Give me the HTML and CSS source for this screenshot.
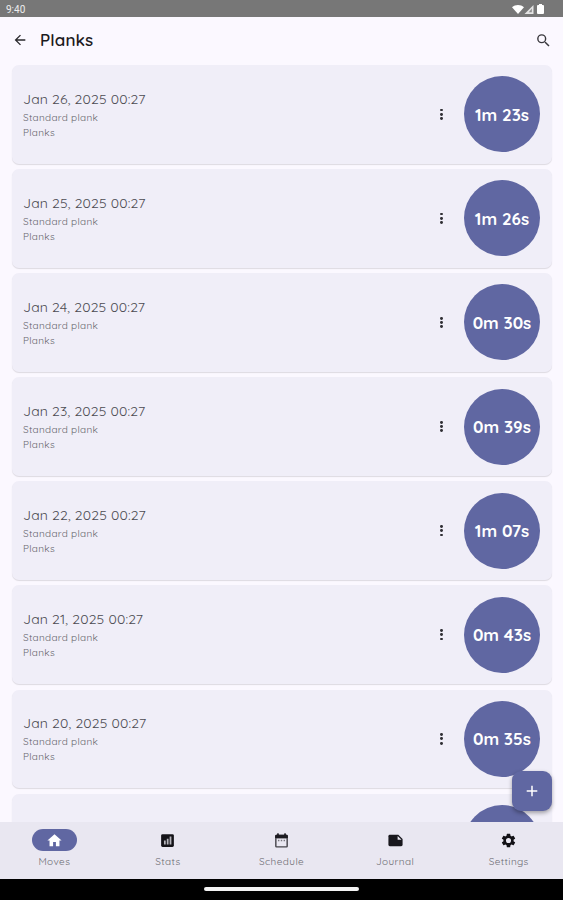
FILE: index.html
```html
<!DOCTYPE html>
<html lang="en">
<head>
    <meta charset="UTF-8">
    <meta name="viewport" content="width=device-width, initial-scale=1.0">
    <title>Planks</title>
    <link rel="stylesheet" href="styles.css">
</head>
<body>
    <div class="status-bar">
        <span class="clock">9:40</span>
        <div class="status-icons">
            <svg width="12" height="9" viewBox="0 0 12 9"><path d="M0 2.2C3.4-.7 8.6-.7 12 2.2L6 9z" fill="#fff"/></svg>
            <svg width="10" height="9" viewBox="0 0 10 9"><path d="M9.500 0v9H.5z" fill="#e4e4e4"/><path d="M7.800 3.500v3.800H4.800z" fill="#8c8c8c"/></svg>
            <svg class="battery" width="7" height="10" viewBox="0 0 7 10"><path d="M2 0h3v1h1a1 1 0 0 1 1 1v7a1 1 0 0 1-1 1H1a1 1 0 0 1-1-1V2a1 1 0 0 1 1-1h1z" fill="#fff"/></svg>
        </div>
    </div>

    <header class="top-bar">
        <svg width="16" height="16" viewBox="0 0 24 24"><path d="M20 11H7.830l5.590-5.590L12 4l-8 8 8 8 1.410-1.410L7.830 13H20z" fill="#29282d"/></svg>
        <h1>Planks</h1>
        <svg class="search" width="17" height="17" viewBox="0 0 24 24"><path d="M15.500 14h-.79l-.28-.27A6.470 6.470 0 0 0 16 9.500 6.500 6.500 0 1 0 9.500 16c1.610 0 3.090-.59 4.230-1.570l.27.28v.79l5 4.990L20.490 19zm-6 0a4.500 4.500 0 1 1 0-9 4.500 4.500 0 0 1 0 9z" fill="#39383d"/></svg>
    </header>

    <main class="list">
        <div class="card">
            <div class="info"><h2>Jan 26, 2025 00:27</h2><p>Standard plank</p><p>Planks</p></div>
            <div class="more"><i></i><i></i><i></i></div>
            <div class="time">1m 23s</div>
        </div>
        <div class="card">
            <div class="info"><h2>Jan 25, 2025 00:27</h2><p>Standard plank</p><p>Planks</p></div>
            <div class="more"><i></i><i></i><i></i></div>
            <div class="time">1m 26s</div>
        </div>
        <div class="card">
            <div class="info"><h2>Jan 24, 2025 00:27</h2><p>Standard plank</p><p>Planks</p></div>
            <div class="more"><i></i><i></i><i></i></div>
            <div class="time">0m 30s</div>
        </div>
        <div class="card">
            <div class="info"><h2>Jan 23, 2025 00:27</h2><p>Standard plank</p><p>Planks</p></div>
            <div class="more"><i></i><i></i><i></i></div>
            <div class="time">0m 39s</div>
        </div>
        <div class="card">
            <div class="info"><h2>Jan 22, 2025 00:27</h2><p>Standard plank</p><p>Planks</p></div>
            <div class="more"><i></i><i></i><i></i></div>
            <div class="time">1m 07s</div>
        </div>
        <div class="card">
            <div class="info"><h2>Jan 21, 2025 00:27</h2><p>Standard plank</p><p>Planks</p></div>
            <div class="more"><i></i><i></i><i></i></div>
            <div class="time">0m 43s</div>
        </div>
        <div class="card">
            <div class="info"><h2>Jan 20, 2025 00:27</h2><p>Standard plank</p><p>Planks</p></div>
            <div class="more"><i></i><i></i><i></i></div>
            <div class="time">0m 35s</div>
        </div>
        <div class="card">
            <div class="info"></div>
            <div class="time"></div>
        </div>
        <button class="fab" type="button" aria-label="Add">
            <svg width="12" height="12" viewBox="0 0 12 12"><path d="M6 .7v10.600M.7 6h10.600" stroke="#fff" stroke-width="1.500"/></svg>
        </button>
    </main>

    <nav class="bottom-nav">
        <a class="tab active">
            <span class="icon"><svg width="17" height="17" viewBox="0 0 24 24"><path d="M10 20v-6h4v6h5v-8h3L12 3 2 12h3v8z" fill="#fff"/></svg></span>
            <span class="label">Moves</span>
        </a>
        <a class="tab">
            <span class="icon"><svg width="17" height="17" viewBox="0 0 24 24"><rect x="3" y="3" width="18" height="18" rx="2" fill="#141318"/><path d="M7 12h2.500v5.500H7zM11 9.500h2.500v8H11zM15 6.500h2.500v11H15z" fill="#b5b4bb"/></svg></span>
            <span class="label">Stats</span>
        </a>
        <a class="tab">
            <span class="icon"><svg width="17" height="17" viewBox="0 0 24 24"><path d="M19 4h-1V2h-2v2H8V2H6v2H5a2 2 0 0 0-2 2v14a2 2 0 0 0 2 2h14a2 2 0 0 0 2-2V6a2 2 0 0 0-2-2zm0 16H5V9h14z" fill="#46454b"/><path d="M3 8.500V6a2 2 0 0 1 2-2h1V2h2v2h8V2h2v2h1a2 2 0 0 1 2 2v2.500z" fill="#1b1a20"/><path d="M7 11h2v2H7zM11 11h2v2h-2zM15 11h2v2h-2z" fill="#77767d"/></svg></span>
            <span class="label">Schedule</span>
        </a>
        <a class="tab">
            <span class="icon"><svg width="17" height="17" viewBox="0 0 24 24"><path d="M4 4h12l6 6v8a2 2 0 0 1-2 2H4a2 2 0 0 1-2-2V6a2 2 0 0 1 2-2z" fill="#18171d"/><path d="M15 5.500V11h5.500z" fill="#e9e7f1"/></svg></span>
            <span class="label">Journal</span>
        </a>
        <a class="tab">
            <span class="icon"><svg width="17" height="17" viewBox="0 0 24 24"><path d="M19.140 12.940a7.500 7.500 0 0 0 0-1.880l2.030-1.580a.5.5 0 0 0 .12-.61l-1.920-3.320a.49.49 0 0 0-.59-.22l-2.390.96a7 7 0 0 0-1.620-.94l-.36-2.540a.48.48 0 0 0-.48-.41h-3.840a.47.47 0 0 0-.47.41l-.36 2.540a7.300 7.300 0 0 0-1.620.94l-2.390-.96a.47.47 0 0 0-.59.22L2.740 8.870a.47.47 0 0 0 .12.61l2.030 1.580a7 7 0 0 0 0 1.880l-2.030 1.580a.5.5 0 0 0-.12.610l1.920 3.320c.12.22.37.29.59.22l2.390-.96c.5.38 1.030.7 1.620.94l.36 2.540c.05.24.24.41.48.41h3.840c.24 0 .44-.17.47-.41l.36-2.540a7.300 7.300 0 0 0 1.620-.94l2.390.96c.22.08.47 0 .59-.22l1.920-3.320a.47.47 0 0 0-.12-.61zM12 15.600a3.600 3.600 0 1 1 0-7.200 3.600 3.600 0 0 1 0 7.200z" fill="#121116"/></svg></span>
            <span class="label">Settings</span>
        </a>
    </nav>

    <div class="gesture-bar"><span></span></div>
</body>
</html>
```
FILE: styles.css
```css
* {
    box-sizing: border-box;
    margin: 0;
    padding: 0;
}
body {
    display: flex;
    flex-direction: column;
    height: 100vh;
    overflow: hidden;
    background-color: #fbf8ff;
    font-family: Quicksand, Lato, sans-serif;
    color: #5b5a61;
}
svg {
    display: block;
}
.status-bar {
    display: flex;
    justify-content: space-between;
    align-items: center;
    height: 17px;
    padding: 1px 19px 0 6px;
    background-color: #777777;
    flex-shrink: 0;
}
.clock {
    font-family: Roboto, sans-serif;
    font-size: 10px;
    color: #ededed;
}
.status-icons {
    display: flex;
    align-items: center;
}
.battery {
    margin-left: 3px;
}
.top-bar {
    display: flex;
    align-items: center;
    height: 48px;
    padding: 0 11px 2px 12px;
    flex-shrink: 0;
}
.top-bar h1 {
    margin-left: 12px;
    font-size: 17px;
    line-height: 20px;
    font-weight: 600;
    letter-spacing: 0.1px;
    color: #1b1a20;
}
.search {
    margin-left: auto;
}
.list {
    position: relative;
    display: flex;
    flex-direction: column;
    gap: 5.6px;
    flex: 1;
    min-height: 0;
    padding: 0 11px 0 11.5px;
    overflow: hidden;
}
.card {
    display: flex;
    align-items: center;
    flex-shrink: 0;
    height: 98.500px;
    padding: 0 11.500px;
    border-radius: 7px;
    background-color: #f0eef8;
    box-shadow: 0 1px 1px rgba(0, 0, 0, 0.12);
}
.card .time {
    margin-right: 0.5px;
}
.info {
    flex: 1;
}
.info h2 {
    font-size: 14px;
    line-height: 20px;
    font-weight: 400;
    letter-spacing: 0.17px;
    color: #4c4b52;
}
.info p {
    font-size: 10px;
    line-height: 15px;
    letter-spacing: 0.3px;
    color: #66656c;
}
.info h2 + p {
    margin-top: 1px;
}
.more {
    display: flex;
    flex-direction: column;
    gap: 1.5px;
    margin-right: 21px;
}
.more i {
    width: 2.8px;
    height: 2.8px;
    border-radius: 50%;
    background-color: #302f35;
}
.time {
    display: flex;
    align-items: center;
    justify-content: center;
    width: 76px;
    height: 76px;
    border-radius: 50%;
    background-color: #6067a2;
    color: #fff;
    font-size: 17px;
    font-weight: 700;
}
.fab {
    position: absolute;
    right: 11px;
    bottom: 11px;
    display: flex;
    align-items: center;
    justify-content: center;
    width: 40px;
    height: 40px;
    border: none;
    border-radius: 9px;
    background-color: #6067a2;
    box-shadow: 0 2px 4px rgba(0, 0, 0, 0.35);
}
.bottom-nav {
    display: flex;
    justify-content: center;
    height: 57px;
    padding-top: 7px;
    background-color: #e9e7f1;
    flex-shrink: 0;
}
.tab {
    display: flex;
    flex-direction: column;
    align-items: center;
    flex: 0 0 113.6px;
    gap: 4px;
}
.icon {
    display: flex;
    align-items: center;
    justify-content: center;
    width: 45px;
    height: 22px;
    border-radius: 11px;
}
.active .icon {
    background-color: #6067a2;
}
.label {
    font-size: 10px;
    line-height: 14px;
    letter-spacing: 0.4px;
    color: #6c6b72;
}
.gesture-bar {
    display: flex;
    align-items: center;
    justify-content: center;
    height: 21px;
    padding-bottom: 1px;
    background-color: #000;
    flex-shrink: 0;
}
.gesture-bar span {
    width: 155px;
    height: 4px;
    border-radius: 2px;
    background-color: #f3f3f3;
}
```
